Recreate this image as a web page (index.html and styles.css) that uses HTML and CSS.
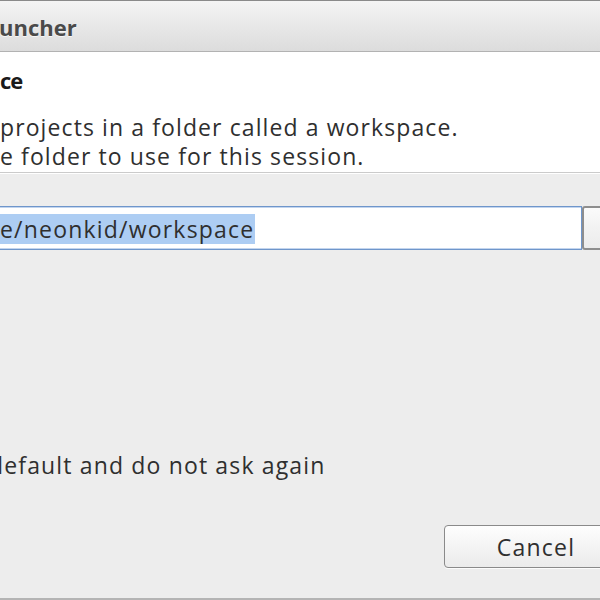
FILE: index.html
```html
<!DOCTYPE html>
<html lang="en">
<head>
<meta charset="utf-8">
<title>Workspace Launcher</title>
<link rel="stylesheet" href="styles.css">
</head>
<body>
<div class="window">
  <header class="titlebar"><span class="title">uncher</span></header>
  <section class="banner">
    <h1 class="banner-title">ce</h1>
    <p class="banner-msg">projects in a folder called a workspace.<br>e folder to use for this session.</p>
  </section>
  <main class="content">
    <div class="ws-row">
      <div class="ws-input"><span class="sel">e/neonkid/workspace</span></div>
      <button class="browse" type="button"></button>
    </div>
    <div class="check-row"><span class="check-label">default and do not ask again</span></div>
    <div class="buttons"><button class="btn" type="button">Cancel</button></div>
  </main>
</div>
</body>
</html>
```
FILE: styles.css
```css
html, body {
  margin: 0;
  padding: 0;
  width: 600px;
  height: 600px;
  overflow: hidden;
  background: #ededed;
}
.window {
  width: 640px;
  height: 600px;
  display: flex;
  flex-direction: column;
  font-family: "Open Sans", "DejaVu Sans", sans-serif;
  font-size: 23px;
  letter-spacing: 1.2px;
  color: #2f2f2f;
}
.titlebar {
  box-sizing: border-box;
  height: 52px;
  border-top: 1px solid #8a8a8a;
  border-bottom: 1px solid #b2b2b2;
  background: linear-gradient(#f4f4f4, #dcdcdc);
  display: flex;
  align-items: center;
  padding-top: 1px;
}
.title {
  font-weight: 700;
  font-size: 22px;
  letter-spacing: 0;
  color: #4a4a4a;
  text-shadow: 0 1px 0 rgba(255,255,255,0.7);
  margin-left: -1px;
}
.banner {
  background: #ffffff;
  height: 121px;
  border-bottom: 1px solid #cbcbcb;
  box-shadow: 0 1px 0 #ffffff;
  padding-top: 13px;
  box-sizing: border-box;
}
.banner-title {
  margin: 0;
  font-size: 22px;
  font-weight: 700;
  letter-spacing: -1px;
  line-height: 30px;
  color: #1a1a1a;
}
.banner-msg {
  margin: 18px 0 0 0;
  padding: 0;
  line-height: 29px;
  letter-spacing: 1.1px;
}
.content {
  flex: 1;
  display: flex;
  flex-direction: column;
  padding-top: 33px;
  border-bottom: 2px solid #b4b4b4;
}
.ws-row {
  display: flex;
  height: 44px;
}
.ws-input {
  box-sizing: border-box;
  flex: 0 0 582px;
  height: 44px;
  background: #ffffff;
  border: 1px solid #6f96cb;
  border-left: none;
  box-shadow: inset 0 1px 0 #c3d5ee, inset 0 -1px 0 #c3d5ee;
  display: flex;
  align-items: center;
  padding-top: 1px;
}
.sel {
  background: #adcdf3;
  line-height: 30px;
  padding-right: 1px;
}
.browse {
  box-sizing: border-box;
  flex: 0 0 100px;
  height: 44px;
  border: 2px solid #8e8e8e;
  border-radius: 3px;
  background: linear-gradient(#fbfbfb, #f2f2f2 50%, #ececec);
}
.check-row {
  margin-top: 200px;
  line-height: 30px;
}
.check-label {
  display: inline-block;
  margin-left: -11px;
  letter-spacing: 1.15px;
}
.buttons {
  margin-top: 45px;
  display: flex;
  padding-left: 444px;
}
.btn {
  box-sizing: border-box;
  width: 183px;
  height: 43px;
  border: 1px solid #8a8a8a;
  border-radius: 4px;
  background: linear-gradient(#fefefe, #f3f3f3 55%, #ebebeb);
  box-shadow: 0 1px 0 rgba(255,255,255,0.8);
  font-family: "Open Sans", "DejaVu Sans", sans-serif;
  font-size: 23px;
  letter-spacing: 1.2px;
  color: #2f2f2f;
  padding: 0 0 0 1px;
}
```
